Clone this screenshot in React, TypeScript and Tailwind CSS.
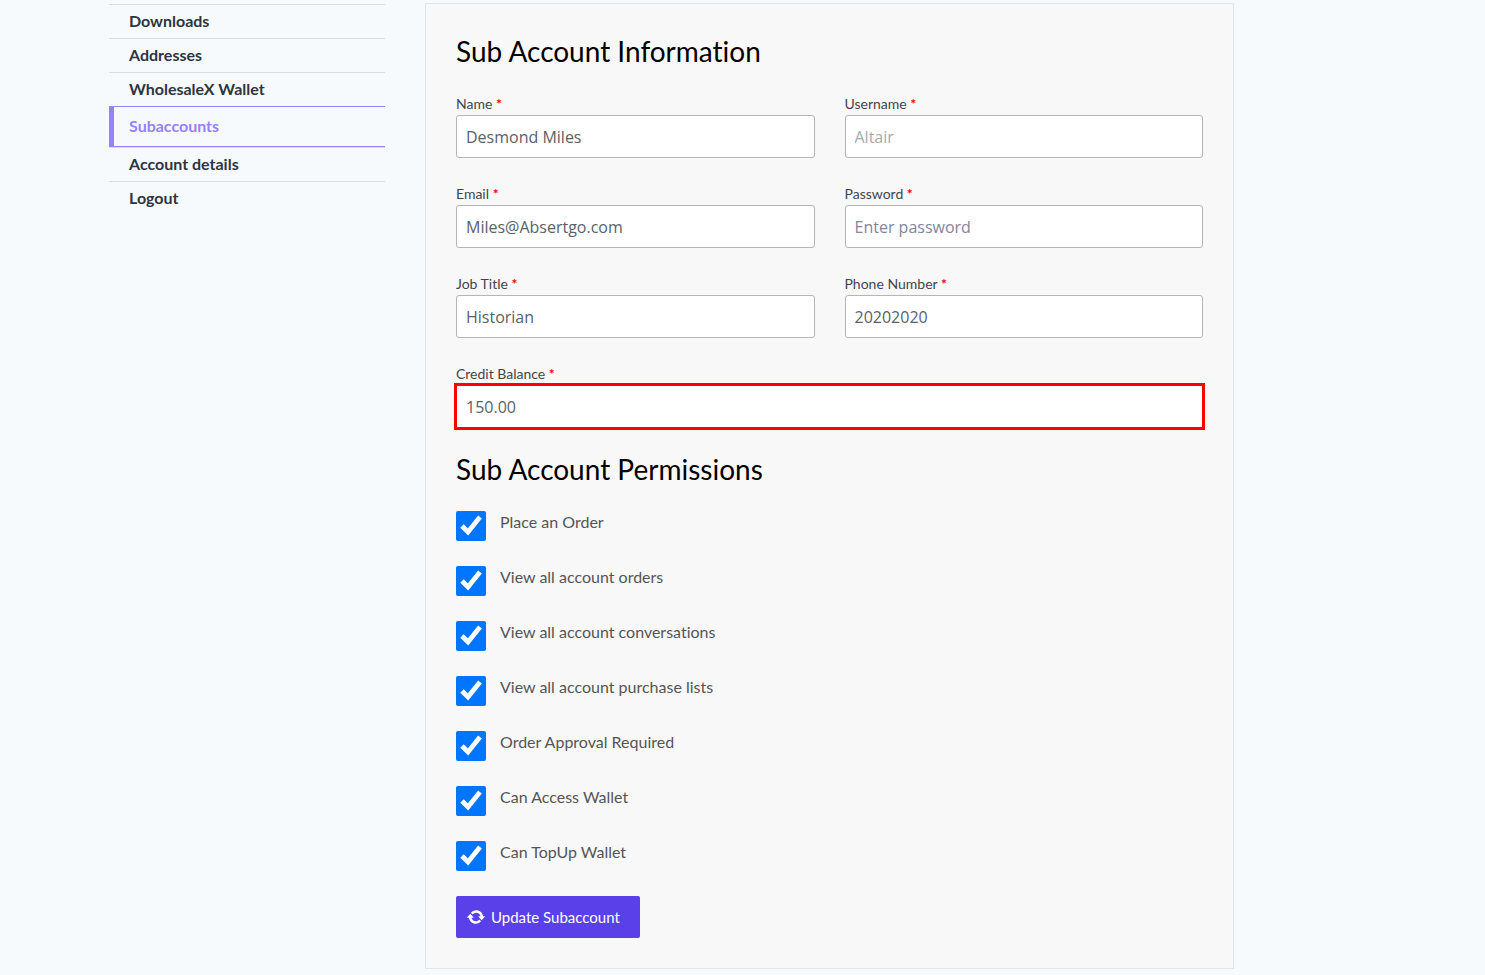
import { useState } from "react";

const NAV_ITEMS = [
  "Downloads",
  "Addresses",
  "WholesaleX Wallet",
  "Subaccounts",
  "Account details",
  "Logout",
];

const FIELDS = [
  { id: "name",     label: "Name",           type: "text",     value: "Desmond Miles" },
  { id: "username", label: "Username",       type: "text",     value: "Altair", disabled: true },
  { id: "email",    label: "Email",          type: "email",    value: "Miles@Absertgo.com" },
  { id: "password", label: "Password",       type: "password", value: "", placeholder: "Enter password" },
  { id: "job",      label: "Job Title",      type: "text",     value: "Historian" },
  { id: "phone",    label: "Phone Number",   type: "tel",      value: "20202020" },
  { id: "credit",   label: "Credit Balance", type: "text",     value: "150.00", highlight: true },
];

const PERMISSIONS = [
  "Place an Order",
  "View all account orders",
  "View all account conversations",
  "View all account purchase lists",
  "Order Approval Required",
  "Can Access Wallet",
  "Can TopUp Wallet",
];

function UpdateIcon() {
  return (
    <svg viewBox="0 0 20 20" className="w-5 h-5 fill-current" aria-hidden="true">
      <path d="M10.2 3.28c3.53 0 6.43 2.61 6.92 6h2.08l-3.5 4-3.5-4h2.32c-.45-1.97-2.21-3.45-4.32-3.45-1.45 0-2.73.71-3.54 1.78L4.95 5.66C6.23 4.2 8.11 3.28 10.2 3.28zm-.4 13.44c-3.52 0-6.43-2.61-6.92-6H.8l3.5-4c1.17 1.33 2.33 2.67 3.5 4H5.48c.45 1.97 2.21 3.45 4.32 3.45 1.45 0 2.73-.71 3.54-1.78l1.71 1.95c-1.28 1.46-3.15 2.38-5.25 2.38z" />
    </svg>
  );
}

export default function App() {
  const [values, setValues] = useState<Record<string, string>>(
    Object.fromEntries(FIELDS.map(f => [f.id, f.value]))
  );
  const [allowed, setAllowed] = useState<string[]>(PERMISSIONS);

  function toggle(permission: string) {
    setAllowed(prev =>
      prev.includes(permission) ? prev.filter(p => p !== permission) : [...prev, permission]
    );
  }

  return (
    <div className="min-h-screen bg-[#f6fafd] font-['Lato',sans-serif] [font-variant-ligatures:none] flex items-start gap-10 pl-[109px] pr-[251px] pt-[3px] pb-[6px]">
      {/* Account menu */}
      <nav className="w-[276px] shrink-0 pt-px">
        <ul>
          {NAV_ITEMS.map(item => (
            <li key={item}>
              <a
                href="#"
                className={
                  item === "Subaccounts"
                    ? "block border-y border-l-[5px] border-[#9681ff] pt-[7px] pb-2 pl-[15px] text-base leading-6 font-bold text-[#9681ff]"
                    : "block border-t border-[#dddddd] pb-[2px] pl-5 text-base leading-[31px] font-bold text-[#2c3540]"
                }
              >
                {item}
              </a>
            </li>
          ))}
        </ul>
      </nav>

      {/* Subaccount form */}
      <form
        onSubmit={e => e.preventDefault()}
        className="flex-1 min-w-0 bg-[#f8f8f8] border border-[#e2e4e7] p-[30px]"
      >
        <h2 className="text-[28px] leading-[34px] text-black mb-[26px]">Sub Account Information</h2>
        <div className="grid grid-cols-2 gap-x-[30px] gap-y-[26px]">
          {FIELDS.map(f => (
            <div key={f.id} className={f.highlight ? "col-span-2" : ""}>
              <label htmlFor={f.id} className="block text-sm leading-5 text-[#43454b] mb-px">
                {f.label} <span className="font-bold text-[#ff0000]">*</span>
              </label>
              <input
                id={f.id}
                type={f.type}
                value={values[f.id]}
                placeholder={f.placeholder}
                disabled={f.disabled}
                onChange={e => setValues({ ...values, [f.id]: e.target.value })}
                className={`block w-full h-[43px] px-[9px] bg-white border font-['Open_Sans',sans-serif] text-base placeholder-[#80869c] ${
                  f.highlight
                    ? "border-[#ff0000] outline-2 outline-[#ff0000] text-[#5a6168]"
                    : "border-[#b5b5b5] rounded-[3px] text-[#5a6168] disabled:text-[#a6a9ae]"
                }`}
              />
            </div>
          ))}
        </div>

        <h2 className="text-[28px] leading-9 text-black mt-[23px] mb-6">Sub Account Permissions</h2>
        <div className="space-y-[25px]">
          {PERMISSIONS.map(p => (
            <label key={p} className="flex items-start gap-[14px] text-base leading-[22px] text-[#555555]">
              <input
                type="checkbox"
                checked={allowed.includes(p)}
                onChange={() => toggle(p)}
                className="w-[30px] h-[30px] shrink-0"
              />
              {p}
            </label>
          ))}
        </div>

        <button
          type="submit"
          className="mt-[25px] h-[42px] pl-[10px] pr-5 flex items-center gap-[5px] rounded-[2px] bg-[#5a40e8] text-[15px] text-white"
        >
          <UpdateIcon />
          Update Subaccount
        </button>
      </form>
    </div>
  );
}
